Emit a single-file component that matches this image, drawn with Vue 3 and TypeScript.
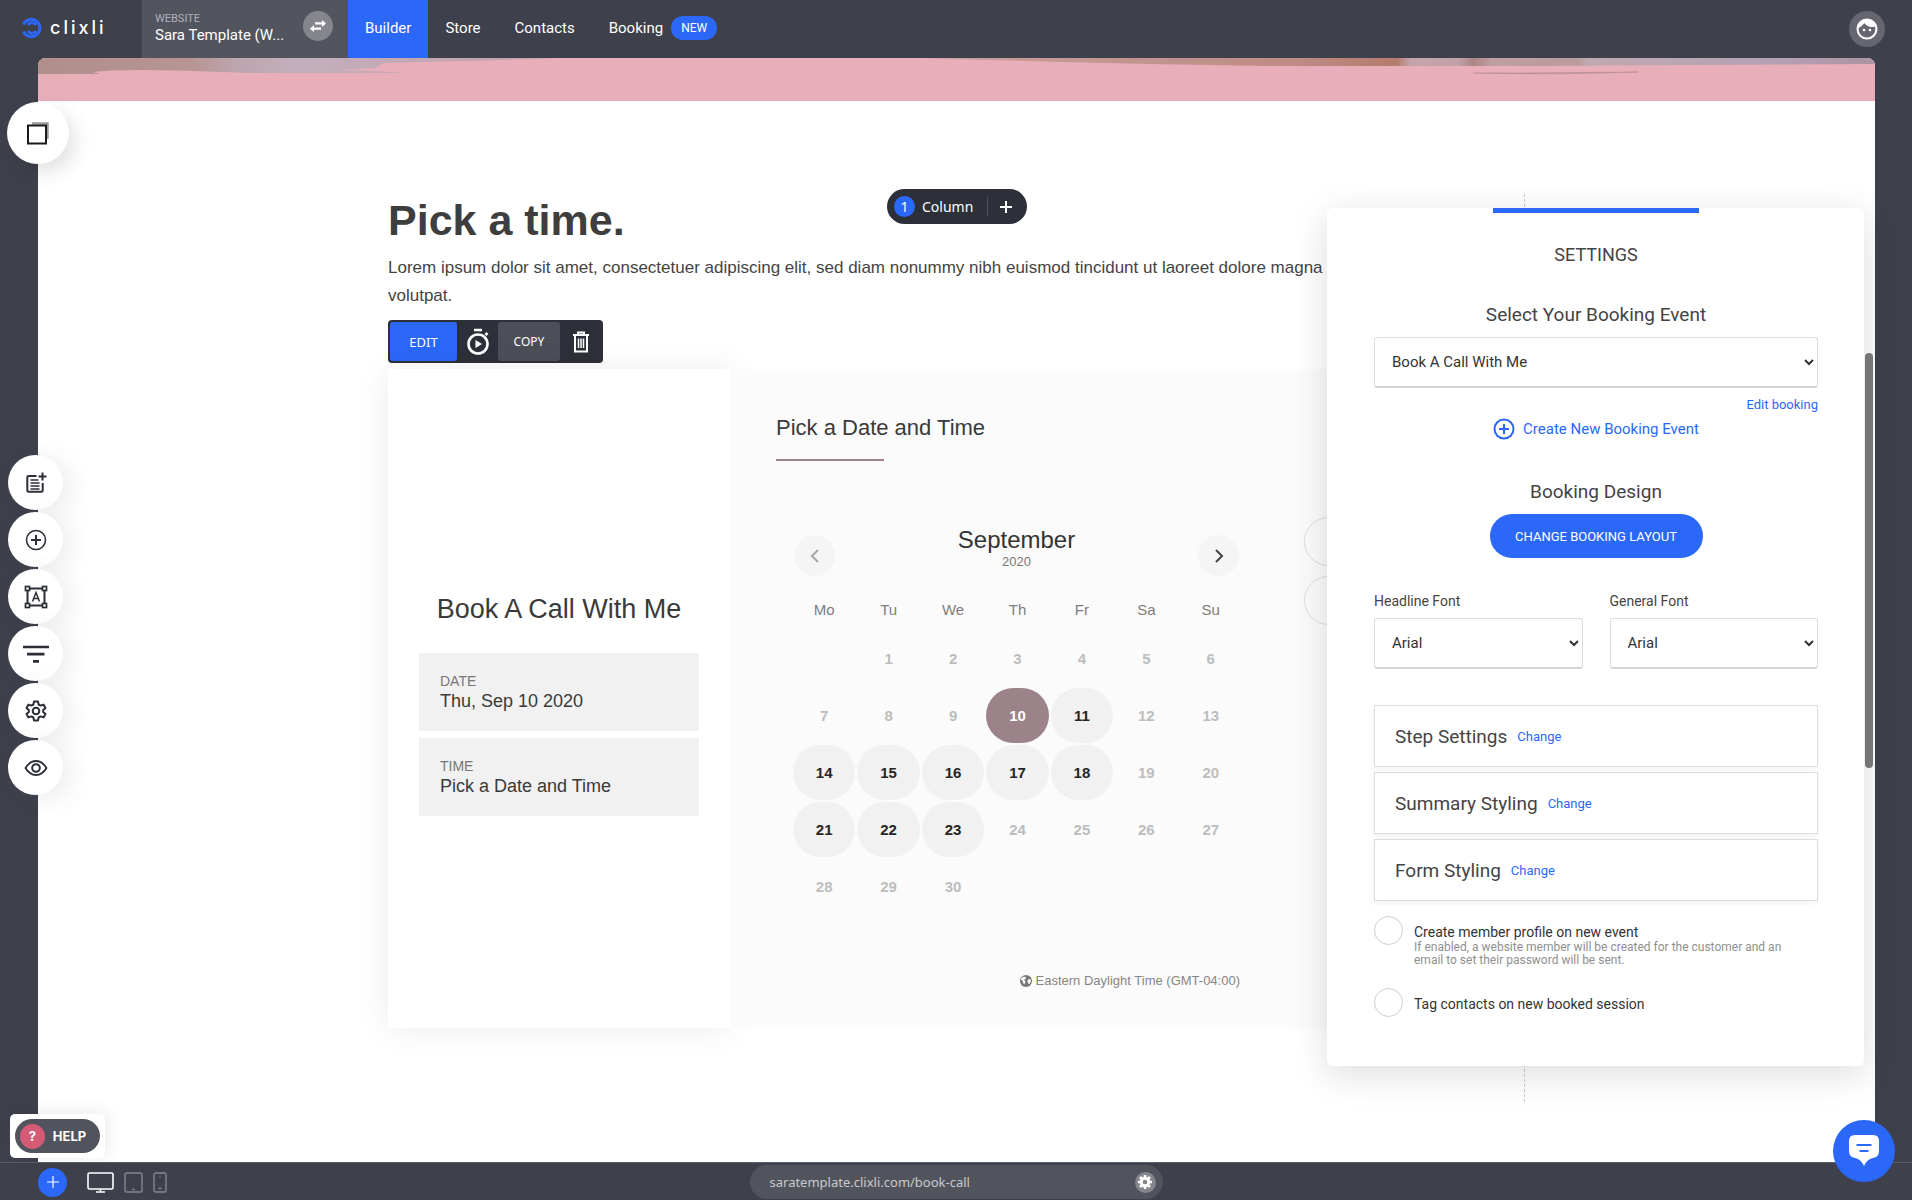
<script setup lang="ts">
import { ref } from 'vue'

interface Day {
  n: number | null
  open: boolean
}

const weekdays = ['Mo', 'Tu', 'We', 'Th', 'Fr', 'Sa', 'Su']
const openDays = [10, 11, 14, 15, 16, 17, 18, 21, 22, 23]
const selected = ref(10)

const weeks: Day[][] = Array.from({ length: 5 }, (_, w) =>
  Array.from({ length: 7 }, (_, d) => {
    const n = w * 7 + d
    return { n: n >= 1 && n <= 30 ? n : null, open: openDays.includes(n) }
  }),
)

const nav = ['Builder', 'Store', 'Contacts', 'Booking']
const styling = ['Step Settings', 'Summary Styling', 'Form Styling']
const tools = ['Add page', 'Add block', 'Text', 'Sections', 'Settings', 'Preview']
const memberProfile = ref(false)
const tagContacts = ref(false)
</script>

<template>
  <div class="app">
    <header class="topbar">
      <a class="logo" href="#">
        <svg width="20" height="22" viewBox="0 0 20 22" fill="none" stroke="#2b68f8" stroke-width="3">
          <path d="M1.5 7.5A8.6 8.6 0 1 1 1.5 14.5" />
          <path d="M14 8A4.6 4.6 0 0 0 6 8M6 14A4.6 4.6 0 0 0 14 14" stroke-width="2.6" />
        </svg>
        <span>clixli</span>
      </a>
      <div class="site">
        <div class="site-text">
          <small>WEBSITE</small>
          <strong>Sara Template (W...</strong>
        </div>
        <button class="swap" aria-label="Switch website">
          <svg width="18" height="14" viewBox="0 0 18 14" fill="#fff">
            <path d="M6 3.2h7V1l4 3.5L13 8V5.600H6zM12 8.400H5V6L1 9.700 5 13v-2.300h7z" />
          </svg>
        </button>
      </div>
      <nav>
        <a v-for="(item, i) in nav" :key="item" href="#" :class="{ active: i === 0 }">
          {{ item }}<span v-if="item === 'Booking'" class="new">NEW</span>
        </a>
      </nav>
      <button class="avatar" aria-label="Account">
        <svg width="24" height="24" viewBox="0 0 24 24" fill="#fff">
          <path
            d="M12 1.500A10.500 10.500 0 1 0 12 22.500 10.500 10.500 0 0 0 12 1.500zM12 20.500A8.500 8.500 0 0 1 3.600 11C6 10 8 8.300 9.200 6a10 10 0 0 0 10.800 3.600A8.500 8.500 0 0 1 12 20.500z"
          />
          <circle cx="9" cy="13" r="1.300" />
          <circle cx="15" cy="13" r="1.300" />
        </svg>
      </button>
    </header>

    <main class="stage">
      <div class="page">
        <svg class="hero" viewBox="0 0 1837 43" preserveAspectRatio="none" aria-hidden="true">
          <defs>
            <linearGradient id="photoLeft">
              <stop offset="0" stop-color="#b08e8c" />
              <stop offset=".3" stop-color="#b79594" />
              <stop offset=".38" stop-color="#bda5ae" />
              <stop offset=".5" stop-color="#c3afbc" />
              <stop offset="1" stop-color="#c4a0a9" />
            </linearGradient>
            <linearGradient id="photoRight">
              <stop offset="0" stop-color="#c9a09f" />
              <stop offset=".4" stop-color="#bd8b84" />
              <stop offset=".5" stop-color="#b57b6d" />
              <stop offset=".515" stop-color="#c3a5ab" />
              <stop offset=".565" stop-color="#c0a1a8" />
              <stop offset=".58" stop-color="#ad8684" />
              <stop offset=".6" stop-color="#bf9fa2" />
              <stop offset=".69" stop-color="#ba9c9d" />
              <stop offset=".7" stop-color="#bfaab2" />
              <stop offset=".9" stop-color="#b5a0b3" />
              <stop offset="1" stop-color="#ab93a0" />
            </linearGradient>
          </defs>
          <rect width="1837" height="43" fill="#e8aeb9" />
          <path d="M0 0H520Q440 3 345 5L338 10Q300 12 295 12Q350 13 365 15L210 15Q140 12 105 12T55 14L62 16H0Z" fill="url(#photoLeft)" />
          <path d="M880 0H1837V6L1500 8H1230Q1080 6 880 0Z" fill="url(#photoRight)" />
          <path d="M1435 15Q1520 17 1600 14Q1520 15 1435 15Z" fill="#b98f98" stroke="#b98f98" stroke-width=".6" />
        </svg>

        <section class="section">
          <div class="column-pill">
            <span class="count">1</span>
            <span class="label">Column</span>
            <button aria-label="Add column">
              <svg width="12" height="12" viewBox="0 0 12 12" stroke="#fff" stroke-width="2"><path d="M6 0v12M0 6h12" /></svg>
            </button>
          </div>
          <h1>Pick a time.</h1>
          <p class="intro">
            Lorem ipsum dolor sit amet, consectetuer adipiscing elit, sed diam nonummy nibh euismod tincidunt ut laoreet dolore magna aliquam erat volutpat.
          </p>

          <div class="toolbar">
            <button class="edit">EDIT</button>
            <button class="tool-icon" aria-label="Animation">
              <svg width="24" height="28" viewBox="0 0 24 28" fill="none" stroke="#fff" stroke-width="2.600">
                <circle cx="12" cy="16" r="9.500" />
                <path d="M8 2h8M19.500 7l2-2" />
                <path d="M9.500 12l6.500 4-6.500 4z" fill="#fff" stroke="none" />
              </svg>
            </button>
            <button class="copy">COPY</button>
            <button class="tool-icon" aria-label="Delete">
              <svg width="18" height="22" viewBox="0 0 18 22" fill="none" stroke="#fff" stroke-width="2">
                <path d="M1 4h16M6 3.500V1.500h6v2M3 4v16.500h12V4" />
                <path d="M6.500 7.500v9.500M9 7.500v9.500M11.500 7.500v9.500" stroke-width="1.500" />
              </svg>
            </button>
          </div>

          <div class="booking">
            <aside class="summary">
              <h2>Book A Call With Me</h2>
              <dl>
                <div>
                  <dt>DATE</dt>
                  <dd>Thu, Sep 10 2020</dd>
                </div>
                <div>
                  <dt>TIME</dt>
                  <dd>Pick a Date and Time</dd>
                </div>
              </dl>
            </aside>

            <div class="picker">
              <h3>Pick a Date and Time</h3>
              <div class="picker-row">
                <div class="calendar">
                  <div class="month">
                    <button class="prev" aria-label="Previous month">
                      <svg width="10" height="16" viewBox="0 0 10 16" fill="none" stroke="#a8a8a8" stroke-width="2"><path d="M8 2L2 8l6 6" /></svg>
                    </button>
                    <div class="month-name">
                      <span>September</span>
                      <small>2020</small>
                    </div>
                    <button class="next" aria-label="Next month">
                      <svg width="10" height="16" viewBox="0 0 10 16" fill="none" stroke="#444" stroke-width="2"><path d="M2 2l6 6-6 6" /></svg>
                    </button>
                  </div>
                  <table>
                    <thead>
                      <tr>
                        <th v-for="d in weekdays" :key="d" scope="col">{{ d }}</th>
                      </tr>
                    </thead>
                    <tbody>
                      <tr v-for="(week, w) in weeks" :key="w">
                        <td v-for="(day, i) in week" :key="i">
                          <button
                            v-if="day.n"
                            :disabled="!day.open"
                            :class="{ open: day.open, selected: day.n === selected }"
                            @click="selected = day.n"
                          >
                            {{ day.n }}
                          </button>
                        </td>
                      </tr>
                    </tbody>
                  </table>
                  <p class="zone">
                    <svg width="12" height="12" viewBox="0 0 12 12">
                      <circle cx="6" cy="6" r="6" fill="#777" />
                      <path d="M1.500 3L4 1.500 6 2.500 5.500 4 4 5 5.500 6.500 4.500 9.500 3 8 2.500 5.500 1 4.500zM8 4.500l2.500-.5.5 2L9.500 9 8 8.500 7.500 6z" fill="#fbfbfb" />
                    </svg>
                    Eastern Daylight Time (GMT-04:00)
                  </p>
                </div>
                <div class="slots">
                  <button aria-label="First time slot"></button>
                  <button aria-label="Second time slot"></button>
                </div>
              </div>
            </div>
          </div>
        </section>
      </div>

      <div class="scroll-thumb"></div>

      <form class="settings" @submit.prevent>
        <div class="tab-mark"></div>
        <h2>SETTINGS</h2>
        <label class="title" for="event">Select Your Booking Event</label>
        <select id="event">
          <option>Book A Call With Me</option>
        </select>
        <a class="edit-link" href="#">Edit booking</a>
        <a class="create" href="#">
          <svg width="22" height="22" viewBox="0 0 22 22" fill="none" stroke="#2b68f8" stroke-width="2">
            <circle cx="11" cy="11" r="9.500" />
            <path d="M11 6v10M6 11h10" />
          </svg>
          Create New Booking Event
        </a>
        <h3 class="title">Booking Design</h3>
        <button class="primary">CHANGE BOOKING LAYOUT</button>
        <div class="fonts">
          <div>
            <label for="headline">Headline Font</label>
            <select id="headline">
              <option>Arial</option>
            </select>
          </div>
          <div>
            <label for="general">General Font</label>
            <select id="general">
              <option>Arial</option>
            </select>
          </div>
        </div>
        <div class="boxes">
          <div v-for="name in styling" :key="name" class="box">
            <span>{{ name }}</span><a href="#">Change</a>
          </div>
        </div>
        <div class="check">
          <input id="member" v-model="memberProfile" type="checkbox" />
          <label for="member">
            Create member profile on new event
            <small>If enabled, a website member will be created for the customer and an email to set their password will be sent.</small>
          </label>
        </div>
        <div class="check">
          <input id="tag" v-model="tagContacts" type="checkbox" />
          <label for="tag">Tag contacts on new booked session</label>
        </div>
      </form>
    </main>

    <footer class="bottombar">
      <div class="devices">
        <button class="add" aria-label="Add">
          <svg width="12" height="12" viewBox="0 0 12 12" stroke="#fff" stroke-width="1.200"><path d="M6 0v12M0 6h12" /></svg>
        </button>
        <button aria-label="Desktop">
          <svg width="27" height="21" viewBox="0 0 27 21" fill="none" stroke="#fff" stroke-width="1.600">
            <rect x="1" y="1" width="25" height="16" rx="1.500" />
            <path d="M13.500 17v3M9 20h9" />
          </svg>
        </button>
        <button aria-label="Tablet">
          <svg width="19" height="21" viewBox="0 0 19 21" fill="none" stroke="#85868e" stroke-width="1.400">
            <rect x="1" y="1" width="17" height="19" rx="1.500" />
            <path d="M8 17.500h3" />
          </svg>
        </button>
        <button aria-label="Phone">
          <svg width="14" height="21" viewBox="0 0 14 21" fill="none" stroke="#85868e" stroke-width="1.400">
            <rect x="1" y="1" width="12" height="19" rx="1.500" />
            <path d="M5.500 16.500h3M6.500 4.500h1" />
          </svg>
        </button>
      </div>
      <div class="address">
        <span>saratemplate.clixli.com/book-call</span>
        <button aria-label="Page settings">
          <svg width="14" height="14" viewBox="0 0 24 24" fill="none" stroke="#fff">
            <circle cx="12" cy="12" r="6.500" stroke-width="5" />
            <path d="M12 0v4M12 20v4M0 12h4M20 12h4M3.500 3.500l3 3M17.500 17.500l3 3M3.500 20.500l3-3M17.500 6.500l3-3" stroke-width="4.500" />
          </svg>
        </button>
      </div>
      <div></div>
    </footer>

    <button class="layers" aria-label="Pages">
      <svg width="24" height="24" viewBox="0 0 24 24" fill="none">
        <path d="M6 2.500h15.500V18" stroke="#999" stroke-width="2.500" />
        <rect x="2" y="4.500" width="18" height="18" fill="#fff" stroke="#1b1c20" stroke-width="2" />
      </svg>
    </button>

    <div class="rail">
      <button v-for="(t, i) in tools" :key="t" :aria-label="t">
        <svg width="26" height="26" viewBox="0 0 26 26" fill="none" stroke="#2c2e38" stroke-width="2">
          <template v-if="i === 0">
            <path d="M13.500 6H5.500A1.200 1.200 0 0 0 4.300 7.200V20.500A1.200 1.200 0 0 0 5.500 21.700H18.500A1.200 1.200 0 0 0 19.700 20.500V13" />
            <path d="M7.500 10h8M7.500 13h9M7.500 16h9M7.500 19h9" stroke-width="1.400" />
            <path d="M19.500 2.500v8M15.500 6.500h8" />
          </template>
          <template v-else-if="i === 1">
            <circle cx="13" cy="13" r="9.500" stroke-width="1.600" />
            <path d="M13 8v10M8 13h10" />
          </template>
          <template v-else-if="i === 2">
            <path d="M6 4.500h14M6 21.500h14M4.500 6v14M21.500 6v14" />
            <g fill="#fff" stroke-width="1.700">
              <rect x="2.500" y="2.500" width="4" height="4" />
              <rect x="19.500" y="2.500" width="4" height="4" />
              <rect x="2.500" y="19.500" width="4" height="4" />
              <rect x="19.500" y="19.500" width="4" height="4" />
            </g>
            <path d="M9.500 17.500L13 8.500l3.500 9M10.700 14.500h4.600" stroke-width="1.500" />
          </template>
          <template v-else-if="i === 3">
            <path d="M0 6h26M4 13.200h17.500M10 20.300h6" stroke-width="2.700" />
          </template>
          <template v-else-if="i === 4">
            <circle cx="13" cy="13" r="3.300" />
            <path
              d="M11 3.500h4l.6 3 2 1.100 2.900-1 2 3.400-2.300 2v2l2.300 2-2 3.400-2.900-1-2 1.100-.6 3h-4l-.6-3-2-1.100-2.900 1-2-3.400 2.300-2v-2l-2.300-2 2-3.400 2.900 1 2-1.100z"
              stroke-linejoin="round"
            />
          </template>
          <template v-else>
            <path d="M2.500 13C5.500 8 9 6 13 6s7.500 2 10.500 7c-3 5-6.500 7-10.500 7s-7.500-2-10.500-7z" stroke-width="1.800" />
            <circle cx="13" cy="13" r="3.800" />
          </template>
        </svg>
      </button>
    </div>

    <div class="help">
      <button><span>?</span>HELP</button>
    </div>

    <button class="chat" aria-label="Chat">
      <svg width="32" height="34" viewBox="0 0 32 34">
        <path d="M7 1h18q6 0 6 6v10q0 6-6 7-5 1-8 6l-1 2-1-2q-3-5-8-6-6-1-6-7V7q0-6 6-6z" fill="#fff" />
        <path d="M8.500 11h15M11.500 17h9" stroke="#2b68f8" stroke-width="2.200" />
      </svg>
    </button>
  </div>
</template>

<style>
body {
  margin: 0;
}
</style>

<style scoped>
* {
  box-sizing: border-box;
}
.app {
  position: relative;
  display: flex;
  flex-direction: column;
  height: 100vh;
  overflow: hidden;
  background: #3e404b;
  color: #444;
  font-family: Roboto, sans-serif;
}
button {
  display: flex;
  align-items: center;
  justify-content: center;
  padding: 0;
  border: 0;
  background: none;
  font: inherit;
  cursor: pointer;
}
a {
  color: #2b68f8;
  text-decoration: none;
}
h1, h2, h3, p, dl, dd {
  margin: 0;
  font-weight: 400;
}

/* top bar */
.topbar {
  display: flex;
  flex: none;
  height: 58px;
  color: #fff;
}
.logo {
  display: flex;
  align-items: center;
  gap: 8px;
  width: 142px;
  padding: 0 0 2px 22px;
  color: #fff;
  font: 500 18px/20px Inter, sans-serif;
  letter-spacing: 3px;
}
.site {
  display: flex;
  justify-content: space-between;
  width: 206px;
  padding: 11px 15px 0 13px;
  background: #52545e;
}
.site small {
  display: block;
  color: #b0b1b6;
  font-size: 11px;
  line-height: 15px;
}
.site strong {
  display: block;
  font-size: 15px;
  font-weight: 400;
  line-height: 18px;
}
.swap {
  width: 30px;
  height: 30px;
  border-radius: 50%;
  background: #85868d;
}
nav {
  display: flex;
}
nav a {
  display: flex;
  align-items: center;
  padding: 0 17px 2px;
  color: #fff;
  font-size: 15px;
}
nav a.active {
  background: #2b68f8;
}
.new {
  margin-left: 8px;
  padding: 0 10px;
  border-radius: 12px;
  background: #2b68f8;
  font-size: 12px;
  line-height: 24px;
}
.avatar {
  width: 36px;
  height: 36px;
  margin: 11px 27px 0 auto;
  border-radius: 50%;
  background: #656670;
}

/* page canvas */
.stage {
  position: relative;
  flex: 1;
  min-height: 0;
  margin: 0 37px 0 38px;
}
.page {
  height: 100%;
  overflow: hidden;
  border-radius: 8px 8px 0 0;
  background: #fff;
}
.hero {
  display: block;
  width: 100%;
  height: 43px;
}
.section {
  position: relative;
  max-width: 1137px;
  height: 908px;
  margin: 93px auto 0;
  border-right: 1px dashed #ccc;
  color: #444;
  font-family: "Liberation Sans", Arial, sans-serif;
}
.column-pill {
  position: absolute;
  top: -5px;
  left: 50%;
  display: flex;
  align-items: center;
  width: 140px;
  height: 35px;
  margin-left: -69px;
  padding-left: 7px;
  border-radius: 18px;
  background: #2d3038;
  color: #fff;
  font: 14px "Noto Sans", sans-serif;
}
.count {
  width: 21px;
  border-radius: 50%;
  background: #2b68f8;
  line-height: 21px;
  text-align: center;
}
.column-pill .label {
  flex: 1;
  margin-left: 7px;
}
.column-pill button {
  width: 40px;
  height: 19px;
  padding-right: 4px;
  border-left: 1px solid #4d5058;
}
h1 {
  color: #3e3e3e;
  font-size: 43px;
  font-weight: 700;
  line-height: 52px;
}
.intro {
  margin-top: 8px;
  padding-right: 80px;
  font-size: 17px;
  line-height: 28px;
}
.toolbar {
  display: flex;
  width: 215px;
  height: 43px;
  margin-top: 10px;
  padding: 2px;
  border-radius: 4px;
  background: #2d3038;
  font: 13px "Noto Sans", sans-serif;
}
.toolbar button {
  color: #fff;
}
.toolbar .edit {
  width: 67px;
  border-radius: 3px;
  background: #2b68f8;
}
.toolbar .copy {
  width: 62px;
  border-radius: 3px;
  background: #4c4f58;
  font-size: 12px;
}
.tool-icon {
  width: 41px;
}

/* booking widget */
.booking {
  display: flex;
  height: 659px;
  margin-top: 6px;
}
.summary {
  display: flex;
  flex: none;
  flex-direction: column;
  justify-content: center;
  width: 342px;
  padding: 12px 31px 0;
  background: #fff;
  box-shadow: 0 0 30px rgba(0, 0, 0, 0.08);
  color: #3a3a3a;
}
.summary h2 {
  font-size: 27px;
  line-height: 32px;
  text-align: center;
}
.summary dl {
  display: grid;
  gap: 7px;
  margin-top: 28px;
}
.summary dl div {
  height: 78px;
  padding: 18px 21px;
  background: #f1f1f1;
}
.summary dt {
  color: #777;
  font-size: 14px;
  line-height: 20px;
}
.summary dd {
  font-size: 18px;
  line-height: 21px;
}
.picker {
  flex: 1;
  padding: 45px 0 0 46px;
  background: #fbfbfb;
}
.picker h3 {
  color: #3a3a3a;
  font-size: 22px;
  line-height: 28px;
}
.picker h3::after {
  display: block;
  width: 108px;
  height: 2px;
  margin-top: 17px;
  background: #9b8389;
  content: "";
}
.picker-row {
  display: flex;
  margin-top: 56px;
}
.calendar {
  width: 453px;
  margin-left: 15px;
}
.month {
  display: flex;
  align-items: flex-end;
  justify-content: space-between;
  height: 59px;
  padding: 0 5px 0 3px;
}
.month button {
  width: 41px;
  height: 41px;
  border-radius: 50%;
  background: #f5f5f5;
}
.month-name {
  align-self: flex-start;
  padding-top: 9px;
  color: #333;
  font-size: 24px;
  line-height: 28px;
  text-align: center;
}
.month-name small {
  display: block;
  color: #777;
  font-size: 13px;
  line-height: 15px;
}
table {
  width: 100%;
  margin-top: 4px;
  border-spacing: 2px;
  table-layout: fixed;
}
th {
  height: 47px;
  padding: 7px 0 0;
  color: #7d7d7d;
  font-size: 15px;
  font-weight: 400;
}
td {
  height: 55px;
  padding: 0;
}
td button {
  width: 100%;
  height: 55px;
  border-radius: 28px;
  color: #bdbdbd;
  font-size: 15px;
  font-weight: 700;
}
td .open {
  background: #f1f1f1;
  color: #262626;
}
td .selected {
  background: #9b8389;
  color: #fff;
}
.zone {
  display: flex;
  align-items: center;
  justify-content: flex-end;
  gap: 4px;
  margin-top: 56px;
  padding-right: 4px;
  color: #868686;
  font-size: 13px;
  line-height: 18px;
}
.slots {
  display: grid;
  flex: 1;
  align-content: start;
  gap: 10px;
  padding-right: 40px;
  margin-left: 60px;
}
.slots button {
  height: 49px;
  border: 1px solid #ddd;
  border-radius: 25px;
}
.scroll-thumb {
  position: absolute;
  top: 295px;
  right: 2px;
  width: 8px;
  height: 415px;
  border-radius: 4px;
  background: #7d7d7d;
}

/* settings panel */
.settings {
  position: absolute;
  top: 150px;
  right: 11px;
  display: flex;
  flex-direction: column;
  align-items: center;
  width: 537px;
  height: 858px;
  padding: 0 46px 0 47px;
  border-radius: 6px;
  background: #fff;
  box-shadow: 0 8px 36px rgba(0, 0, 0, 0.14);
}
.tab-mark {
  width: 206px;
  height: 5px;
  background: #2b68f8;
}
.settings h2 {
  margin-top: 31px;
  font-size: 18px;
  line-height: 22px;
}
.settings .title {
  font-size: 19px;
  line-height: 24px;
}
label.title {
  margin-top: 37px;
}
.settings select {
  width: 100%;
  height: 51px;
  padding: 0 4px 0 13px;
  border: 1px solid #ddd;
  border-bottom: 2px solid #d4d4d4;
  border-radius: 3px;
  background: #fff;
  color: #333;
  font: 15px Roboto, sans-serif;
}
.settings #event {
  margin-top: 10px;
}
.edit-link {
  align-self: flex-end;
  margin-top: 8px;
  font-size: 13px;
  line-height: 18px;
}
.create {
  display: flex;
  align-items: center;
  gap: 8px;
  margin-top: 4px;
  font-size: 15px;
  line-height: 22px;
}
h3.title {
  margin-top: 40px;
}
.primary {
  width: 213px;
  height: 44px;
  margin-top: 10px;
  border-radius: 22px;
  background: #2b68f8;
  color: #fff;
  font-size: 13px;
}
.fonts {
  display: flex;
  gap: 27px;
  width: 100%;
  margin-top: 34px;
}
.fonts div {
  flex: 1;
}
.fonts label {
  display: block;
  margin-bottom: 8px;
  font-size: 14px;
  line-height: 18px;
}
.boxes {
  display: grid;
  gap: 5px;
  width: 100%;
  margin-top: 36px;
}
.box {
  display: flex;
  align-items: center;
  gap: 10px;
  height: 62px;
  padding-left: 20px;
  border: 1px solid #ddd;
  box-shadow: -1px 3px 6px rgba(0, 0, 0, 0.05);
  font-size: 19px;
}
.box a {
  font-size: 13px;
}
.check {
  display: flex;
  align-items: flex-start;
  gap: 11px;
  width: 100%;
  margin-top: 15px;
}
.check + .check {
  margin-top: 21px;
}
.check input {
  flex: none;
  width: 29px;
  height: 29px;
  margin: 0;
  border: 1px solid #ccc;
  border-radius: 50%;
  appearance: none;
  background: #fff;
}
.check label {
  margin-top: 7px;
  padding-right: 24px;
  color: #333;
  font-size: 14px;
  line-height: 18px;
}
.check small {
  display: block;
  color: #8f8f8f;
  font-size: 12px;
  line-height: 13px;
}

/* bottom bar */
.bottombar {
  display: grid;
  flex: none;
  grid-template-columns: 1fr 413px 1fr;
  height: 38px;
  border-top: 1px solid #5c5e66;
}
.devices {
  display: flex;
  align-items: center;
  gap: 10px;
  padding: 1px 0 0 38px;
}
.add {
  width: 29px;
  height: 29px;
  margin-right: 10px;
  border-radius: 50%;
  background: #2b68f8;
}
.address {
  display: flex;
  align-items: center;
  justify-content: space-between;
  height: 34px;
  margin-top: 2px;
  padding: 0 7px 0 20px;
  border-radius: 17px;
  background: #52545d;
  color: #c9c9cd;
  font: 13px "Noto Sans", sans-serif;
}
.address button {
  width: 21px;
  height: 21px;
  border-radius: 50%;
  background: #85868d;
}

/* floating controls */
.layers,
.rail,
.help,
.chat {
  position: absolute;
}
.layers {
  top: 102px;
  left: 7px;
  width: 62px;
  height: 62px;
  border-radius: 50%;
  background: #fff;
  box-shadow: 6px 8px 20px rgba(0, 0, 0, 0.12);
}
.rail {
  top: 455px;
  left: 8px;
  display: grid;
  gap: 2px;
}
.rail button {
  width: 55px;
  height: 55px;
  border-radius: 50%;
  background: #fff;
  box-shadow: 8px 4px 24px rgba(62, 70, 90, 0.1);
}
.help {
  bottom: 42px;
  left: 10px;
  padding: 5px;
  border-radius: 5px;
  background: #fff;
  box-shadow: 4px -2px 16px rgba(0, 0, 0, 0.08);
}
.help button {
  gap: 8px;
  width: 85px;
  height: 34px;
  padding-right: 9px;
  border-radius: 17px;
  background: #52545d;
  color: #fff;
  font: 700 13px Inter, sans-serif;
}
.help span {
  width: 25px;
  border-radius: 50%;
  background: #d55a76;
  line-height: 25px;
}
.chat {
  right: 17px;
  bottom: 18px;
  width: 62px;
  height: 62px;
  border-radius: 50%;
  background: #2b68f8;
}
</style>
